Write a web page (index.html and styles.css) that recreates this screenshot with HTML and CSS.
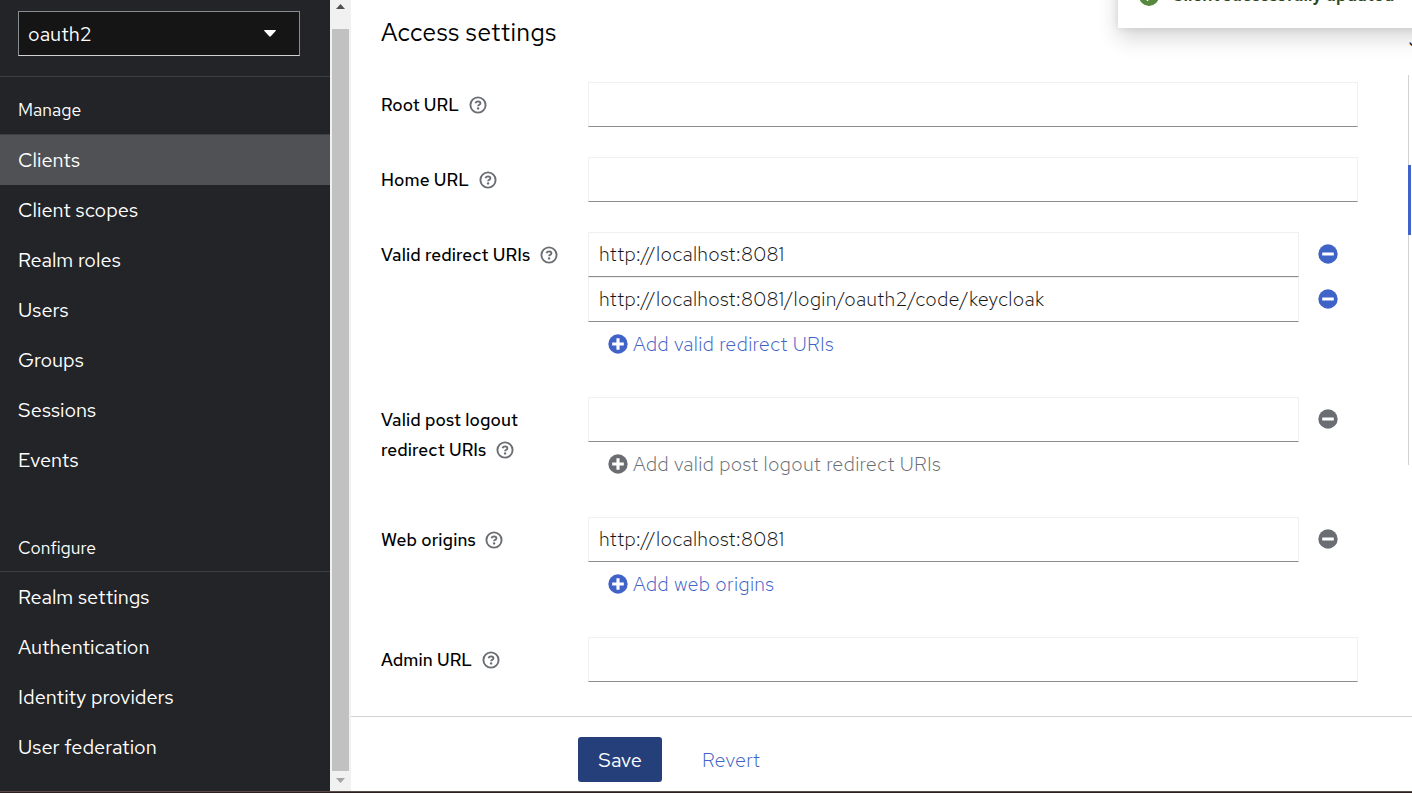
FILE: index.html
```html
<!DOCTYPE html>
<html lang="en">
<head>
<meta charset="utf-8">
<title>Client details</title>
<link rel="stylesheet" href="styles.css">
</head>
<body>
<svg class="defs" aria-hidden="true">
  <symbol id="help" viewBox="0 0 18 18">
    <circle cx="9" cy="9" r="7.6" fill="none" stroke="currentColor" stroke-width="1.9"/>
    <path d="M6.5 7.2Q7 5.4 9.1 5.4Q11.4 5.5 11.4 7.2Q11.4 8.3 10.1 8.8Q9.1 9.2 9.1 10.2" fill="none" stroke="currentColor" stroke-width="1.9"/>
    <circle cx="9.1" cy="12.4" r="1.2" fill="currentColor"/>
  </symbol>
  <symbol id="plus" viewBox="0 0 20 20">
    <circle cx="10" cy="10" r="9.7" fill="currentColor"/>
    <path d="M10 4.2V15.8M4.2 10H15.8" stroke="#fff" stroke-width="3.1" fill="none"/>
  </symbol>
  <symbol id="minus" viewBox="0 0 20 20">
    <circle cx="10" cy="10" r="9.7" fill="currentColor"/>
    <rect x="4.2" y="8.4" width="11.6" height="3.2" rx=".5" fill="#fff"/>
  </symbol>
</svg>
<div class="app">
  <div class="body">
    <nav class="sidebar">
      <div class="realm">
        <button class="select"><span class="t-realm">oauth2</span><svg class="caret" viewBox="0 0 12 7"><path d="M.6 0H11.4Q12.3.3 11.6 1.1L6.8 6.3Q6 7 5.2 6.3L.4 1.1Q-.3.3.6 0Z" fill="#fff"/></svg></button>
      </div>
      <h2 class="group manage"><span>Manage</span></h2>
      <ul class="nav">
        <li class="item active"><span>Clients</span></li>
        <li class="item"><span>Client scopes</span></li>
        <li class="item"><span>Realm roles</span></li>
        <li class="item"><span>Users</span></li>
        <li class="item"><span>Groups</span></li>
        <li class="item"><span>Sessions</span></li>
        <li class="item"><span>Events</span></li>
      </ul>
      <h2 class="group configure"><span>Configure</span></h2>
      <ul class="nav">
        <li class="item"><span>Realm settings</span></li>
        <li class="item"><span>Authentication</span></li>
        <li class="item"><span>Identity providers</span></li>
        <li class="item"><span>User federation</span></li>
      </ul>
    </nav>
    <div class="scrollbar">
      <svg class="arrow" viewBox="0 0 9 5"><path d="M0 5L4.5 0L9 5Z" fill="#505050"/></svg>
      <div class="thumb"></div>
      <svg class="arrow" viewBox="0 0 9 5"><path d="M0 0H9L4.5 5Z" fill="#a3a3a3"/></svg>
    </div>
    <main class="main">
      <div class="content">
        <section class="form">
          <h1 class="title"><span>Access settings</span></h1>
          <div class="row">
            <div class="label"><span>Root URL</span><svg class="help"><use href="#help"/></svg></div>
            <div class="field"><div class="input"></div></div>
          </div>
          <div class="row">
            <div class="label"><span>Home URL</span><svg class="help"><use href="#help"/></svg></div>
            <div class="field"><div class="input"></div></div>
          </div>
          <div class="row">
            <div class="label"><span>Valid redirect URIs</span><svg class="help"><use href="#help"/></svg></div>
            <div class="field">
              <div class="line"><div class="input"><span>http://localhost:8081</span></div><svg class="minus"><use href="#minus"/></svg></div>
              <div class="line"><div class="input"><span>http://localhost:8081/login/oauth2/code/keycloak</span></div><svg class="minus"><use href="#minus"/></svg></div>
              <div class="add"><svg class="plus"><use href="#plus"/></svg><span>Add valid redirect URIs</span></div>
            </div>
          </div>
          <div class="row">
            <div class="label"><span>Valid post logout<br>redirect URIs</span><svg class="help"><use href="#help"/></svg></div>
            <div class="field">
              <div class="line off"><div class="input"></div><svg class="minus"><use href="#minus"/></svg></div>
              <div class="add off"><svg class="plus"><use href="#plus"/></svg><span>Add valid post logout redirect URIs</span></div>
            </div>
          </div>
          <div class="row">
            <div class="label"><span>Web origins</span><svg class="help"><use href="#help"/></svg></div>
            <div class="field">
              <div class="line off"><div class="input"><span>http://localhost:8081</span></div><svg class="minus"><use href="#minus"/></svg></div>
              <div class="add"><svg class="plus"><use href="#plus"/></svg><span>Add web origins</span></div>
            </div>
          </div>
          <div class="row">
            <div class="label"><span>Admin URL</span><svg class="help"><use href="#help"/></svg></div>
            <div class="field"><div class="input"></div></div>
          </div>
        </section>
        <aside class="jump">
          <div class="jump-title">J</div>
          <div class="track"><div class="current"></div></div>
        </aside>
      </div>
      <footer class="actions">
        <button class="save"><span>Save</span></button>
        <a class="revert"><span>Revert</span></a>
      </footer>
    </main>
  </div>
  <div class="taskbar"></div>
  <div class="toast">
    <svg class="ok" viewBox="0 0 20 20"><circle cx="10" cy="10" r="10" fill="#56883e"/><path d="M5 10L8.5 13.5L15 7" fill="none" stroke="#fff" stroke-width="2.4"/></svg>
    <span>Client successfully updated</span>
  </div>
</div>
</body>
</html>
```
FILE: styles.css
```css
* { box-sizing: border-box; }
body { margin: 0; font-family: "Red Hat Text", Inter, sans-serif; font-size: 20px; color: #151515; }
.defs { position: absolute; width: 0; height: 0; }
.app { position: relative; width: 1412px; height: 793px; overflow: hidden; display: flex; flex-direction: column; background: #fff; }
.body { flex: 1; display: flex; min-height: 0; }
.taskbar { height: 2px; background: #2c2120; border-top: 1px solid #574a49; }
button { font: inherit; border: 0; }
ul, h1, h2 { margin: 0; padding: 0; list-style: none; font-weight: 400; }

.sidebar { width: 330px; background: #222427; color: #fff; }
.realm { height: 77px; padding: 11px 30px 0 18px; border-bottom: 1px solid #3c3f42; }
.select { width: 282px; height: 45px; display: flex; align-items: center; justify-content: space-between; padding: 0 23px 0 9px; background: #151515; border: 1px solid #8a8d90; border-bottom-color: #d2d2d2; color: #fff; }
.caret { width: 12px; height: 7px; }
.group { padding-left: 18px; font-size: 17.5px; letter-spacing: .05px; line-height: 24px; border-bottom: 1px solid #3c3f42; }
.manage { height: 58px; padding-top: 21px; }
.configure { height: 87px; padding-top: 51px; }
.item { height: 50px; padding-left: 18px; line-height: 50px; }
.active { background: #4f5154; }

.scrollbar { width: 21px; background: #f1f1f1; display: flex; flex-direction: column; align-items: center; justify-content: space-between; padding: 4px 0 8px; }
.arrow { width: 9px; height: 5px; }
.thumb { width: 17px; height: 742px; margin-bottom: -1px; margin-top: 11px; background: #c1c1c1; }

.main { flex: 1; display: flex; flex-direction: column; min-width: 0; }
.content { flex: 1; display: flex; }
.form { width: 1057px; padding: 17px 50px 0 30px; display: flex; flex-direction: column; gap: 30px; }
.title { height: 35px; line-height: 31px; font-size: 25px; font-weight: 440; letter-spacing: .2px; color: #000; }
.row { display: grid; grid-template-columns: 207px 770px; }
.label { padding-top: 8px; line-height: 30px; font-size: 17.5px; letter-spacing: .12px; font-weight: 530; color: #000; white-space: nowrap; }
.help { width: 18px; height: 18px; margin-left: 9.3px; vertical-align: -3px; color: #6a6e73; }
.input { height: 45px; width: 100%; padding-left: 10px; line-height: 43px; border: 1px solid #f0f0f0; border-bottom-color: #8a8d90; font-weight: 320; letter-spacing: .26px; white-space: nowrap; }
.line { display: flex; align-items: center; gap: 19px; color: #3f63c7; }
.line .input { width: 711px; color: #151515; }
.minus, .plus { width: 20px; height: 20px; margin-bottom: 1px; flex: none; }
.add { height: 45px; padding: 0 0 1px 20px; display: flex; align-items: center; gap: 5px; color: #3f63c7; font-weight: 320; letter-spacing: .27px; white-space: nowrap; }
.add .plus { margin-bottom: 0; }
.off { color: #6a6e73; }

.jump { width: 4px; overflow: hidden; padding-top: 30px; }
.jump-title { height: 45px; padding-left: 1px; font-size: 17.5px; line-height: 20px; white-space: nowrap; }
.track { height: 390px; border-left: 1px solid #d2d2d2; padding-top: 90px; }
.current { width: 3px; height: 70px; margin-left: -1px; background: #3f63c7; }

.actions { height: 75px; border-top: 1px solid #d2d2d2; padding: 20px 0 0 227px; display: flex; gap: 40px; }
.save { width: 84px; height: 45px; padding: 0; background: #253f7a; color: #fff; border-radius: 3px; }
.revert { line-height: 47px; color: #3f63c7; font-weight: 320; letter-spacing: .3px; }

.toast { position: absolute; left: 1118px; top: -42px; width: 330px; height: 70px; padding: 28px 0 0 21px; display: flex; gap: 12px; background: #fff; box-shadow: 0 10px 20px rgba(3,3,3,.16), 0 0 8px rgba(3,3,3,.1); color: #2d4821; font-size: 17.2px; font-weight: 600; line-height: 20px; white-space: nowrap; }
.ok { width: 20px; height: 20px; }
.toast span { margin-top: -1px; }
```
